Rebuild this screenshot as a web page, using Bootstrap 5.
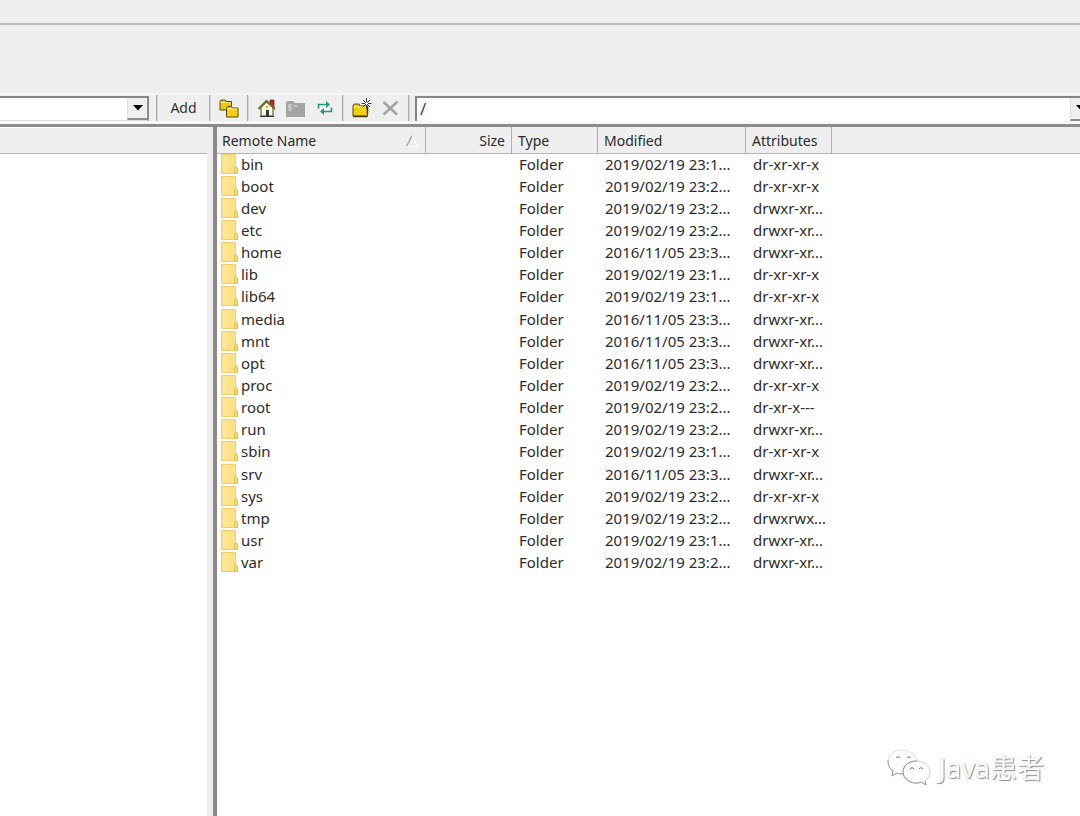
<!DOCTYPE html>
<html lang="en">
<head>
<meta charset="utf-8">
<meta name="viewport" content="width=device-width, initial-scale=1">
<title>Remote files</title>
<link href="https://cdn.jsdelivr.net/npm/bootstrap@5.3.0/dist/css/bootstrap.min.css" rel="stylesheet">
<style>
body{background:#efefef;color:#2b2b2b;font-family:"Noto Sans","Noto Sans CJK SC",sans-serif;font-size:15px;line-height:20px}
.menu-strip{height:25px;border-bottom:2px solid #bdbdbd}
.tool-space{height:68px}
.tools{height:31px;border-top:2px solid #f6f6f6;border-bottom:3px solid #f8f8f8}
.tool-sep{width:2px;height:26px;border-left:1px solid #aaa;border-right:1px solid #d8d8d8}
.combo{height:25px;border:solid #858585;border-width:2px 0 0;background:#fff}
.combo-left{width:149px;border-right:2px solid #8c8c8c;border-bottom:1px solid #ddd;margin-right:7px}
.combo-right{border-left:2px solid #858585;margin-left:5px;margin-right:-10px}
.combo select{appearance:none;border:0;background:transparent;color:#444;padding:0 24px 0 3px;font-size:17px;line-height:20px;outline-offset:-2px}
.drop{width:20px;background:#efefef;border-bottom:2px solid #8c8c8c;border-left:1px solid #ddd;pointer-events:none}
.tool{width:29px;height:26px;padding:0;border:0;background:none}
.tool svg{display:block;margin:auto}
.tool-wide{width:36px}
.tool-text{width:51px;color:#333;font-size:14px}
.tool-set{padding:0 3px}
.local{width:207px}
.panes{border-top:3px solid #8c8c8c}
.local-head{height:27px;background:#efefef;border-bottom:1px solid #b5b5b5;border-top:1px solid #fff}
.splitter{width:6px;background:#efefef}
.remote{border-left:4px solid #8a8a8a}
.files{table-layout:fixed;width:100%;border-collapse:separate;border-spacing:0}
.files th{height:27px;padding:2px 6px 0;font-weight:400;font-size:14px;background:#efefef;border-right:1px solid #b0b0b0;border-bottom:1px solid #b5b5b5;white-space:nowrap}
.files th:first-child{padding-left:5px}
.files th:last-child{border-right:0}
.files td{height:22px;padding:0 7px;white-space:nowrap;overflow:hidden;vertical-align:top}
.files td:first-child{padding-left:4px}
.files tr:nth-child(7n) td{height:23px}
.files td svg{flex:none;margin-right:3px}
.c-name{width:209px}.c-std{width:86px}.c-date{width:148px}
.mark-sign{right:36px;bottom:28px;font-size:27px;line-height:38px;color:#fff;text-shadow:1px 1px 1px #888,0 0 1px #ccc}
</style>
</head>
<body class="vh-100 overflow-hidden d-flex flex-column">
<svg class="d-none">
<symbol id="folder" viewBox="0 0 17 20"><path d="M.5.5h14v12l2 1.500v5.500h-16z" fill="#fbe289" stroke="#efd06b"/><path d="M13.500 19.500v-5l1-2 2 1.500v5.500z" fill="#f7d870" stroke="#e6c152"/><path d="M2 2h5v16H2z" fill="#ffe9a0" opacity=".5"/></symbol>
</svg>
<div class="menu-strip flex-shrink-0"></div>
<div class="tool-space flex-shrink-0"></div>
<div class="tools d-flex align-items-center flex-shrink-0" role="toolbar" aria-label="File tools">
  <div class="combo combo-left position-relative flex-shrink-0">
    <select class="w-100 h-100" aria-label="Local path"><option></option></select>
    <span class="drop position-absolute top-0 bottom-0 end-0 d-flex align-items-center justify-content-center"><svg width="10" height="6"><path d="M0 0h10L5 5.500z"/></svg></span>
  </div>
  <div class="tool-sep"></div>
  <button type="button" class="tool tool-text">Add</button>
  <div class="tool-sep"></div>
  <button type="button" class="tool tool-wide" aria-label="Synchronize folders"><svg width="20" height="19" viewBox="0 0 20 19"><g stroke="#5a4a08"><path d="M1 2.500l1-1.500h4l1 1.500h5.500V11H1z" fill="#eec90f"/><path d="M1.500 3.500h10" stroke="#fff27c"/><path d="M7.500 9l1-1.500h4l1 1.500h5.500v9H7.500z" fill="#f2cf14"/><path d="M8.500 10h9.500" stroke="#fff68a"/></g></svg></button>
  <div class="tool-sep"></div>
  <div class="d-flex tool-set">
    <button type="button" class="tool" aria-label="Home"><svg width="18" height="18" viewBox="0 0 18 18"><path d="M12 1h4v8l-4-4z" fill="#b52b2b" stroke="#6b1515" stroke-width=".7"/><path d="M3 8.500L8.500 3l6.500 6v8H3z" fill="#fffbe0" stroke="#4a4520"/><path d="M.5 10L8.500 1.800 17 10" fill="none" stroke="#716a20" stroke-width="2"/><path d="M8 11h3v6H8z" fill="#3b3b32"/><circle cx="9" cy="8" r="1.300" fill="#c9b52a"/><path d="M2 17.500h14" stroke="#333"/></svg></button>
    <button type="button" class="tool" aria-label="Open terminal folder" disabled><svg width="19" height="17" viewBox="0 0 19 17"><path d="M0 3l1-2h6l2 2h10v14H0z" fill="#a5a5a5"/><path d="M6 5H3v2.500h2V10H2.500M8 6h4" fill="none" stroke="#d2d2d2" stroke-width="1.300"/></svg></button>
    <button type="button" class="tool" aria-label="Refresh"><svg width="16" height="16" viewBox="0 0 16 16"><path d="M1.500 8.500V4.500h9M14.500 7.500v4H6" fill="none" stroke="#219784" stroke-width="1.600"/><path d="M9 1l4 3.500L9 8zM7 8l-4 3.500L7 15z" fill="#219784"/></svg></button>
  </div>
  <div class="tool-sep"></div>
  <div class="d-flex tool-set">
    <button type="button" class="tool" aria-label="New folder"><svg width="20" height="20" viewBox="0 0 20 20"><path d="M1 8l1-2h5l1 2h7.500v10H1z" fill="#f0ce12" stroke="#5a4a08"/><path d="M2 9h12.500" stroke="#fff68a"/><path d="M15.500 16V8.500M1 18.500h14.500" stroke="#4b3e05" stroke-width="1.500"/><path d="M14.500 0v11M9.500 5.500h10M11 2l7 7M18 2l-7 7" stroke="#444"/><path d="M14.500 4v3M13 5.500h3" stroke="#fff"/></svg></button>
    <button type="button" class="tool" aria-label="Delete" disabled><svg width="17" height="16" viewBox="0 0 17 16"><path d="M1.500 2L15 14.500M15.500 1.500L1.500 14.500" stroke="#a3a3a3" stroke-width="2.500"/></svg></button>
  </div>
  <div class="tool-sep"></div>
  <div class="combo combo-right position-relative flex-fill">
    <select class="w-100 h-100 d-block" aria-label="Remote path"><option>/</option></select>
    <span class="drop position-absolute top-0 bottom-0 end-0 d-flex align-items-center justify-content-center"><svg width="10" height="6"><path d="M0 0h10L5 5.500z"/></svg></span>
  </div>
</div>
<main class="panes d-flex flex-fill">
  <section class="local bg-white flex-shrink-0" aria-label="Local files"><div class="local-head"></div></section>
  <div class="splitter flex-shrink-0"></div>
  <section class="remote bg-white flex-fill" aria-label="Remote files">
    <table class="files">
      <colgroup><col class="c-name"><col class="c-std"><col class="c-std"><col class="c-date"><col class="c-std"><col></colgroup>
      <thead><tr>
        <th><div class="d-flex justify-content-between align-items-center"><span>Remote Name</span><svg width="14" height="14"><path d="M1.500 12.500L7 1.500" stroke="#999" stroke-width="1.300"/><path d="M7 1.500l5.500 11h-11" fill="none" stroke="#fff"/></svg></div></th>
        <th class="text-end">Size</th><th>Type</th><th>Modified</th><th>Attributes</th><th></th>
      </tr></thead>
      <tbody id="rows"></tbody>
    </table>
  </section>
</main>
<div class="mark-sign position-absolute d-flex align-items-center">
  <svg width="44" height="40" viewBox="0 0 44 40" class="me-2" fill="#fff" stroke="#999"><path d="M15 2C7 2 1 7 1 14c0 4 2 7 5 9l-1 5 5-3c2 1 4 1 7 1 7-1 13-6 13-12S23 2 15 2z" stroke="#ddd"/><path d="M1 12c0 6 2 9 5 11l-1 5 5-3c2 1 4 1 7 1" fill="none"/><path d="M29 13c-8 0-13 5-13 11s6 11 13 11c2 0 4 0 5-1l5 3-1-4c3-2 5-5 5-9 0-6-6-11-14-11z" stroke="#ccc"/><path d="M30 13c-9 0-14 5-14 11s6 11 13 11c2 0 4 0 5-1l5 3-1-4" fill="none"/><path d="M9 10q2-3 4 0M20 10q2-3 4 0M23 21q2-3 4 0M32 21q2-3 4 0" fill="none" stroke="#777"/></svg>
  <span>Java患者</span>
</div>
<script src="https://cdn.jsdelivr.net/npm/bootstrap@5.3.0/dist/js/bootstrap.bundle.min.js"></script>
<script>
const a='2019/02/19 23:1...', b='2019/02/19 23:2...', c='2016/11/05 23:3...', r='dr-xr-xr-x', w='drwxr-xr...';
const files=[['bin',a,r],['boot',b,r],['dev',b,w],['etc',b,w],['home',c,w],['lib',a,r],['lib64',a,r],['media',c,w],['mnt',c,w],['opt',c,w],['proc',b,r],['root',b,'dr-xr-x---'],['run',b,w],['sbin',a,r],['srv',c,w],['sys',b,r],['tmp',b,'drwxrwx...'],['usr',a,w],['var',b,w]];
document.getElementById('rows').innerHTML=files.map(([n,d,p])=>`<tr><td><div class="d-flex"><svg width="17" height="20"><use href="#folder"/></svg>${n}</div></td><td></td><td>Folder</td><td>${d}</td><td>${p}</td><td></td></tr>`).join('');
</script>
</body>
</html>
